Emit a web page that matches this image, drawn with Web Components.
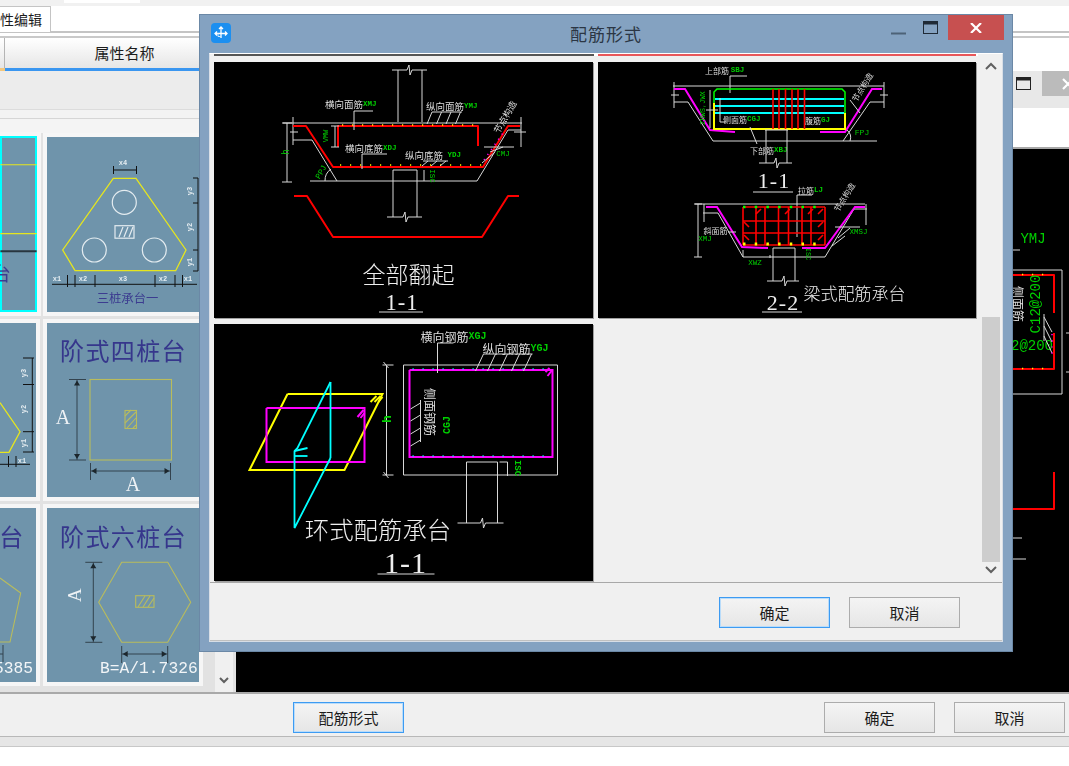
<!DOCTYPE html>
<html lang="zh">
<head>
<meta charset="utf-8">
<title>配筋形式</title>
<style>
  html, body { margin: 0; padding: 0; width: 1069px; height: 766px; overflow: hidden; background: #fff; }
  body { font-family: "Noto Sans CJK SC", "Liberation Sans", sans-serif; }
</style>
</head>
<body>
<cad-app>
  <pile-grid slot="thumbs">
    <pile-thumb drawing="a1" selected></pile-thumb>
    <pile-thumb drawing="a2"></pile-thumb>
    <pile-thumb drawing="b1"></pile-thumb>
    <pile-thumb drawing="b2"></pile-thumb>
    <pile-thumb drawing="c1"></pile-thumb>
    <pile-thumb drawing="c2"></pile-thumb>
  </pile-grid>
  <ui-button slot="left" primary>配筋形式</ui-button>
  <ui-button slot="right">确定</ui-button>
  <ui-button slot="right">取消</ui-button>
</cad-app>
<rebar-dialog caption="配筋形式">
  <cad-figure drawing="full"></cad-figure>
  <cad-figure drawing="beam"></cad-figure>
  <cad-figure drawing="ring"></cad-figure>
  <ui-button slot="actions" primary>确定</ui-button>
  <ui-button slot="actions">取消</ui-button>
</rebar-dialog>

<script>
// small svg helpers, all coordinates are screen pixels, the viewBox does the rest
const pl = (c, pts) => `<polyline class="${c}" points="${pts}"/>`;
const tx = (c, x, y, s, rot = 0, size = 0) =>
  `<text class="${c}" x="${x}" y="${y}" text-anchor="middle" dominant-baseline="central"${size ? ` font-size="${size}"` : ""}${rot ? ` transform="rotate(${rot} ${x} ${y})"` : ""}>${s}</text>`;
const lab = (x, y, cn, size, en, enSize) =>
  `<text class="lb" x="${x}" y="${y}" dominant-baseline="central" font-size="${size}">${cn}<tspan class="gr" font-size="${enSize}">${en}</tspan></text>`;
const brk = (c, x1, x, x2, y) => pl(c, `${x1},${y} ${x - 2},${y} ${x},${y - 5} ${x + 1},${y + 5} ${x + 3},${y} ${x2},${y}`);
const dots = (cls, x1, y1, x2, y2) => `<line class="${cls}" x1="${x1}" y1="${y1}" x2="${x2}" y2="${y2}"/>`;
const legs = (x, y, step, n, dx, dy) => {
  let d = "";
  for (let i = 0; i < n; i++) d += `M${x + i * step} ${y}l${dx} ${dy}`;
  return `<path class="w" d="${d}"/>`;
};

const FIGURES = {
  full: { view: "214 62 379 256", body: `
    ${brk("w", 392, 409, 427, 70)}
    ${pl("w", "398,70 398,122")}${pl("w", "422,70 422,122")}
    ${pl("w", "283,123 522,123")}
    ${pl("w", "287,123 287,182")}${pl("w", "282,123 292,123")}${pl("w", "282,182 292,182")}
    ${pl("w", "293,117 293,145")}${pl("w", "521,117 521,147")}
    ${pl("w", "290,132 298,132")}${pl("w", "514,132 526,132")}
    ${pl("w", "293,140 312,140 337,181")}
    ${pl("w", "310,181 477,181 508,130 521,130")}
    ${pl("r", "293,126 306,126 333,167 483,167 508,126 520,126")}
    ${pl("r", "478,146 478,126 338,126 338,147")}
    ${dots("yd", 342, 125, 476, 125)}${dots("yd", 340, 165, 482, 165)}
    ${dots("md", 484, 160, 505, 130)}
    ${pl("w", "331,126 339,126")}${pl("w", "331,147 339,147")}${pl("w", "335,126 335,147")}
    ${tx("gt", 286, 152, "h", -90, 10)}
    ${tx("gt", 326, 136, "VMW", -90, 7)}
    ${lab(325, 104, "横向面筋", 9.5, "XMJ", 7.5)}
    ${pl("w", "373,111 354,111 354,130")}
    ${lab(426, 106, "纵向面筋", 9.5, "YMJ", 7.5)}
    ${pl("w", "462,112 432,112")}${legs(432, 112, 9.5, 4, -5, 12)}
    ${lab(345, 148, "横向底筋", 9.5, "XDJ", 7.5)}
    ${pl("w", "387,154 362,154 362,169")}
    ${lab(405, 155, "纵向底筋", 9.5, " YDJ", 7.5)}
    ${pl("w", "448,161 423,161")}${legs(428, 161, 9, 3, -6, 5)}
    ${tx("lb", 505, 117, "节点构造", -60, 9)}
    ${tx("gt", 503, 154, "CMJ", 0, 7.5)}
    ${pl("w", "484,147 514,147")}${pl("w", "490,152 503,147")}${pl("w", "482,163 495,152")}
    ${tx("gt", 321, 172, "PPJ", -60, 8)}
    <path class="w" d="M325 181a14 14 0 0 1 6-12"/>
    ${tx("gt", 432, 176, "ISC", 90, 7.5)}
    ${pl("w", "424,170 424,181")}
    ${pl("w", "393,170 393,217")}${pl("w", "417,170 417,217")}${pl("w", "393,170 417,170")}
    ${brk("w", 387, 405, 422, 217)}
    ${pl("r", "294,196 307,196 333,237 482,237 508,196 519,196")}
    ${tx("tt", 408.5, 272.5, "全部翻起", 0, 23)}
    ${tx("nm", 402, 302, "1-1", 0, 22.5)}
    ${pl("w", "379,312 423,312")}
  ` },
  beam: { view: "598 62 378 256", body: `
    ${lab(705, 70, "上部筋 ", 8, "SBJ", 7.5)}
    ${pl("w", "747,76 730,76 730,93")}
    ${pl("w", "673,86 884,86")}${pl("w", "674,82 674,108")}${pl("w", "884,82 884,108")}
    ${pl("w", "671,95 679,95")}${pl("w", "880,95 888,95")}
    ${pl("w", "674,102 688,102 713,141 877,141")}
    ${pl("w", "843,141 870,102 884,102")}
    ${pl("m", "674,89 685,89 710,130 735,132")}
    ${pl("m", "820,132 845,132 872,89 882,89")}
    ${pl("gn", "714,128 714,92 717,89 842,89 845,92 845,128")}
    ${pl("ye", "714,103 714,129 845,129 845,113")}
    ${pl("cy", "715,99 844,99")}${pl("cy", "715,106 844,106")}${pl("cy", "715,113 844,113")}
    ${[773, 779, 785.5, 792, 798, 804.5].map(x => pl("rt", `${x},89 ${x},129`)).join("")}
    ${pl("w", "720,98 720,122 726,122")}
    ${pl("w", "710,90 710,128")}${pl("w", "706,110 718,110")}
    ${tx("gt", 703, 108, "ZHWS,JWX", -90, 7)}
    ${lab(723, 119, "侧面筋", 8, "CGJ", 7.5)}
    ${lab(805, 120, "腹筋", 8, "GJ", 7.5)}
    ${pl("w", "750,127 757,144")}
    ${lab(750, 150, "下部筋", 8, "XBJ", 7.5)}
    ${pl("w", "766,130 766,163")}${pl("w", "787,130 787,163")}${pl("w", "765,130 788,130")}
    ${brk("w", 759, 776, 792, 163)}
    ${tx("lb", 862, 87, "节点构造", -58, 8)}
    ${pl("w", "850,100 860,113")}
    <path class="w" d="M850 141a10 10 0 0 0 -3 -11"/>
    ${tx("gt", 862, 132, "FPJ", 0, 8)}
    ${tx("nm", 774, 180, "1-1", 0, 22)}
    ${pl("w", "753,192 793,192")}

    ${lab(798, 190, "拉筋", 8, "LJ", 7.5)}
    ${pl("w", "812,195 797,195 797,237")}
    ${pl("w", "695,204 865,204")}${pl("w", "698,204 698,257")}${pl("w", "694,204 702,204")}${pl("w", "694,257 702,257")}
    ${pl("w", "703,213 718,213 743,257 825,257 854,209 867,209")}
    ${pl("w", "704,204 704,222")}${pl("w", "866,204 866,225")}
    ${pl("m", "706,207 717,207 742,247 768,248")}
    ${pl("m", "802,248 825,248 855,207 865,207")}
    ${[743, 756, 765, 778.5, 788.5, 802, 811, 825].map(x => pl("rt", `${x},207 ${x},245`)).join("")}
    ${[207, 221, 233, 245].map(y => pl("rt", `743,${y} 825,${y}`)).join("")}
    ${pl("rt", "756,214 761,209")}${pl("rt", "785,214 790,209")}${pl("rt", "808,214 813,209")}${pl("rt", "818,214 823,209")}
    ${pl("rt", "744,222 749,227")}${pl("rt", "744,235 749,240")}${pl("rt", "823,222 818,227")}${pl("rt", "823,235 818,240")}
    ${dots("gd", 743, 207, 825, 207)}${dots("yb", 743, 244, 825, 244)}
    ${tx("lb", 715.5, 230.5, "斜面筋", 0, 8)}${pl("w", "728,232 736,232")}
    ${tx("gt", 705, 239, "XMJ", 0, 7.5)}
    ${tx("gt", 858.5, 231.5, "XMSJ", 0, 7.5)}
    ${pl("w", "835,227 860,227")}${pl("w", "838,238 850,228")}${pl("w", "832,246 845,236")}
    ${tx("gt", 755, 263, "XWZ", 0, 7.5)}
    ${pl("w", "743,257 743,250")}${pl("w", "770,258 770,255")}
    ${tx("gt", 808, 254, "ISC", 90, 7)}
    ${pl("w", "773,248 773,281")}${pl("w", "795,248 795,281")}${pl("w", "773,248 795,248")}
    ${brk("w", 767, 784, 799, 281)}
    ${tx("lb", 844, 197, "节点构造", -58, 8)}
    ${tx("nm", 783, 302, "2-2", 0, 22)}
    ${pl("w", "762,312 802,312")}
    ${tx("tt", 854.5, 292, "梁式配筋承台", 0, 17)}
  ` },
  ring: { view: "214 324 378 257", body: `
    ${pl("ye", "287,394 382,394 344,470 249,470 287,394")}
    ${pl("m", "266,408 364,408 364,462 266,462 266,408")}
    ${pl("cy", "330,382 330,458")}
    ${pl("cy", "330,382 297,448 294,451 294,528 330,458")}
    ${pl("cy", "294,451 307,448")}${pl("cy", "294,456 307,456")}
    ${pl("ye", "370,402 376,396")}${pl("ye", "374,402 380,396")}${pl("ye", "378,402 382,397")}
    ${pl("m", "357,417 363,410")}${pl("m", "360,418 364,413")}
    ${pl("w", "403,365 557,365 557,475 403,475 403,365")}
    ${pl("m", "409,370 552,370 552,457 409,457 409,370")}
    ${dots("cd", 412, 369, 550, 369)}${dots("cd", 412, 456, 550, 456)}
    ${pl("m", "547,376 551,371")}${pl("m", "545,372 549,368")}
    ${pl("w", "386,365 386,475")}${pl("w", "382,365 393,365")}${pl("w", "382,475 393,475")}
    ${pl("w", "383,362 388,368")}${pl("w", "383,472 388,478")}
    ${tx("gs", 387, 419, "h", -90, 13)}
    ${lab(420, 336, "横向钢筋", 12, "XGJ", 10)}
    ${pl("w", "453,343 437,343 437,373")}
    ${lab(482, 348, "纵向钢筋", 12, "YGJ", 10)}
    ${pl("w", "532,354 483,354")}${legs(483, 354, 12, 5, -8, 17)}
    ${tx("lb", 430, 412, "侧面钢筋", 90, 12)}
    ${tx("gs", 447, 425, "CGJ", -90, 10)}
    ${pl("w", "420,400 420,442")}${legs(420, 403, 0, 1, -10, 6)}${legs(420, 415, 0, 1, -10, 6)}${legs(420, 428, 0, 1, -10, 6)}${legs(420, 440, 0, 1, -10, 6)}
    ${pl("w", "466,462 466,523")}${pl("w", "497,462 497,523")}${pl("w", "466,462 497,462")}
    ${brk("w", 457, 482, 503, 523)}
    ${pl("w", "499,462 507,462 507,476")}
    ${tx("gs", 516, 468, "ISC", 90, 9)}
    ${tx("tt", 377.5, 528, "环式配筋承台", 0, 24.4)}
    ${tx("nm", 405, 562, "1-1", 0, 30)}
    ${pl("w", "377,574 434,574")}
  ` }
};

const FIGURE_CSS = `
  svg { display: block; width: 100%; height: 100%; filter: blur(.25px); }
  polyline, path, line { fill: none; }
  .w { stroke: #d8d8d8; stroke-width: 1; }
  .r { stroke: #f00; stroke-width: 2; stroke-linejoin: round; }
  .rt { stroke: #f00; stroke-width: 1.6; }
  .m { stroke: #f0f; stroke-width: 2; }
  .ye { stroke: #ff0; stroke-width: 2; }
  .cy { stroke: #0ff; stroke-width: 1.8; }
  .gn { stroke: #0f0; stroke-width: 1.5; }
  .yd { stroke: #ff0; stroke-width: 1.5; stroke-dasharray: 1.2 8.8; }
  .md { stroke: #f0f; stroke-width: 1.5; stroke-dasharray: 1.2 5; }
  .cd { stroke: #0ff; stroke-width: 1.5; stroke-dasharray: 1.2 8.8; }
  .gd { stroke: #0f0; stroke-width: 2.5; stroke-dasharray: 2.5 9.2; }
  .yb { stroke: #ff0; stroke-width: 3; stroke-dasharray: 2.5 9.2; }
  text { font-family: "Noto Sans CJK SC", "Liberation Sans", sans-serif; }
  .lb { fill: #dcdcdc; }
  .tt { fill: #eee; font-weight: 300; }
  .nm { fill: #eee; font-family: "Liberation Serif", serif; letter-spacing: 1px; }
  .gr, .gt, .gs { fill: #00d000; font-family: "Liberation Mono", monospace; }
  .gs, .gr { font-weight: bold; }
`;

class CadFigure extends HTMLElement {
  constructor() {
    super();
    this.shadowDOM = this.attachShadow({ mode: "open" });
  }

  connectedCallback() {
    const fig = FIGURES[this.getAttribute("drawing")];
    this.shadowDOM.innerHTML = `
      <style>
        :host { display: block; background: #000; }
        ${FIGURE_CSS}
      </style>
      <svg viewBox="${fig.view}">${fig.body}</svg>
    `;
  }
}
customElements.define("cad-figure", CadFigure);

// dimension line with arrow heads, thumbnails use these a lot
const dimV = (x, y1, y2) => `<path class="dk" d="M${x} ${y1}V${y2}"/><path class="ar" d="M${x} ${y1 + 1}l-3 5h6zM${x} ${y2 - 1}l-3 -5h6z"/><path class="dk" d="M${x - 8} ${y1}h17M${x - 8} ${y2}h17"/>`;
const dimH = (y, x1, x2) => `<path class="dk" d="M${x1} ${y}H${x2}"/><path class="ar" d="M${x1 + 1} ${y}l5 -3v6zM${x2 - 1} ${y}l-5 -3v6z"/><path class="dk" d="M${x1} ${y - 8}v17M${x2} ${y - 8}v17"/>`;
const bar = (x1, y1, x2, y2) => `<path class="bk" d="M${x1} ${y1}L${x2} ${y2}"/>`;

const THUMBS = {
  a1: { view: "0 137 36 175", body: `
    <path class="yt" d="M0 165.7H36"/><path class="yl" d="M0 234H36"/>
    <path class="bk2" d="M0 251.7H36"/>
    ${tx("ti", 1, 273, "台", 0, 19)}
  ` },
  a2: { view: "47 137 152 175", body: `
    <polygon class="yl" points="113.3,178.3 136,178.3 186,250 175.7,270.7 75,270.7 62.7,250"/>
    <circle class="cw" cx="124.3" cy="202.3" r="12"/><circle class="cw" cx="94.3" cy="250" r="12"/><circle class="cw" cx="154.3" cy="250" r="12"/>
    <rect class="cw" x="115" y="225.7" width="19" height="12.5"/>
    <path class="cw" d="M119 237l4 -10M124 237l4 -10M129 237l4 -10"/>
    ${bar(113.5, 170, 136.5, 170)}${bar(113.5, 166, 113.5, 174)}${bar(136.5, 166, 136.5, 174)}
    ${tx("sm", 123, 163, "x4")}
    ${bar(198, 178, 198, 271)}${bar(193, 178, 198, 178)}${bar(193, 203, 198, 203)}${bar(193, 250, 198, 250)}${bar(193, 271, 198, 271)}
    ${tx("sm", 190, 191, "y3", -90)}${tx("sm", 190, 227, "y2", -90)}${tx("sm", 190, 262, "y1", -90)}
    ${bar(52, 284.3, 197, 284.3)}
    ${[67.5, 75, 95, 155, 175, 182.5].map(x => bar(x, 275, x, 287)).join("")}
    ${tx("sm", 57, 279, "x1")}${tx("sm", 83, 279, "x2")}${tx("sm", 123, 279, "x3")}${tx("sm", 163, 279, "x2")}${tx("sm", 188, 279, "x1")}
    ${tx("ti", 127.5, 297.5, "三桩承台一", 0, 12.3)}
  ` },
  b1: { view: "0 323 36 174", body: `
    <polyline class="yl" points="0,402.7 20,431.7 9,452.3 0,452.3"/>
    ${bar(32.3, 358, 32.3, 452)}${bar(23, 358, 34, 358)}${bar(23, 384.5, 34, 384.5)}${bar(23, 431.7, 34, 431.7)}${bar(23, 452, 34, 452)}
    ${tx("sm", 24, 373, "y3", -90)}${tx("sm", 24, 409, "y2", -90)}${tx("sm", 24, 443, "y1", -90)}
    ${bar(0, 464.3, 30, 464.3)}${bar(8.5, 456, 8.5, 467)}${bar(16, 456, 16, 467)}
    ${tx("sm", 22, 460.7, "x1")}
  ` },
  b2: { view: "47 323 152 174", body: `
    ${tx("hd", 123.5, 349, "阶式四桩台", 0, 24)}
    <rect class="ys" x="90" y="379.5" width="81.5" height="80.5"/>
    <rect class="ys" x="125" y="410.5" width="11.5" height="18"/>
    <path class="ys" d="M125 416l6 -6M125 423l11 -11M127 428l9 -10M133 428l3 -3"/>
    ${dimV(77, 379.5, 460)}${dimH(471, 90.5, 170.5)}
    ${tx("ltr", 63, 417, "A", 0, 20)}${tx("ltr", 133, 484, "A", 0, 20)}
  ` },
  c1: { view: "0 508 36 174", body: `
    ${tx("hd", 12, 535, "台", 0, 24)}
    <polyline class="ys" points="0,578 20.7,593 10,642 0,642"/>
    <path class="dk" d="M3 645v17M0 654h3"/>
    <text class="mn" x="33" y="668" text-anchor="end" dominant-baseline="central" font-size="16.3">5385</text>
  ` },
  c2: { view: "47 508 152 174", body: `
    ${tx("hd", 123.5, 535, "阶式六桩台", 0, 24)}
    <polygon class="ys" points="121.7,562.3 167.7,562.3 190.7,602.3 167.7,642.3 121.7,642.3 98.7,602.3"/>
    <rect class="ys" x="135.7" y="595.7" width="18.3" height="11.6"/>
    <path class="ys" d="M138 607l7 -11M143 607l7 -11M148 607l6 -9"/>
    ${dimV(93.3, 562.3, 642.3)}${dimH(654, 121.7, 167.7)}
    ${tx("ltr", 74, 595, "A", -90, 19)}
    <text class="mn" x="100" y="668" dominant-baseline="central" font-size="16.3">B=A/1.7326</text>
  ` }
};

class PileThumb extends HTMLElement {
  constructor() {
    super();
    this.shadowDOM = this.attachShadow({ mode: "open" });
  }

  connectedCallback() {
    const fig = THUMBS[this.getAttribute("drawing")];
    this.shadowDOM.innerHTML = `
      <style>
        :host { display: block; background: #6f94ab; outline: 4px solid #f6f6f6; position: relative; }
        :host([selected]) { outline: 2px solid #0ff; outline-offset: -2px; margin: -1px -1px 0 0; box-shadow: 0 0 0 4px #f6f6f6; }
        svg { display: block; width: 100%; height: 100%; filter: blur(.3px); }
        path, polyline, polygon, rect, circle { fill: none; }
        .yl { stroke: #e6e61e; stroke-width: 1.3; }
        .yt { stroke: #e6e61e; stroke-width: 1; }
        .ys { stroke: #b9bc5c; stroke-width: 1.1; }
        .cw { stroke: #e4ecf0; stroke-width: 1.2; }
        .bk { stroke: #111; stroke-width: 1; }
        .bk2 { stroke: #28363f; stroke-width: 2; }
        .dk { stroke: #33434e; stroke-width: 1; }
        path.ar { fill: #1c262c; }
        text { font-family: "Noto Sans CJK SC", "Liberation Sans", sans-serif; }
        .ti { fill: #3c3c90; }
        .hd { fill: #36368c; letter-spacing: 1.4px; font-family: "Noto Sans CJK SC", serif; }
        .sm { fill: #e4ecf0; font: 7px "Liberation Mono", monospace; font-weight: bold; }
        .ltr { fill: #eef2f5; font-family: "Liberation Serif", serif; }
        .mn { fill: #f2f5f7; font-family: "Liberation Mono", monospace; }
      </style>
      <svg viewBox="${fig.view}">${fig.body}</svg>
    `;
  }
}
customElements.define("pile-thumb", PileThumb);

class PileGrid extends HTMLElement {
  constructor() {
    super();
    this.attachShadow({ mode: "open" }).innerHTML = `
      <style>
        :host {
          display: grid;
          grid-template-columns: 36px 152px;
          grid-template-rows: 175px 174px 174px;
          column-gap: 11px;
          row-gap: 11px;
        }
      </style>
      <slot></slot>
    `;
  }
}
customElements.define("pile-grid", PileGrid);

class UiButton extends HTMLElement {
  constructor() {
    super();
    this.attachShadow({ mode: "open" }).innerHTML = `
      <style>
        :host {
          display: flex;
          align-items: center;
          justify-content: center;
          box-sizing: border-box;
          width: 111px;
          height: 31px;
          border: 1px solid #acacac;
          background: linear-gradient(#f4f4f4, #e6e6e6);
          color: #1c1c1c;
          font: 15px "Noto Sans CJK SC", "Liberation Sans", sans-serif;
        }
        :host([primary]) { border: 1px solid #3d9bf2; box-shadow: inset 0 0 0 1px #b9dcfa; }
      </style>
      <slot></slot>
    `;
  }
}
customElements.define("ui-button", UiButton);

class ScrollBar extends HTMLElement {
  constructor() {
    super();
    this.attachShadow({ mode: "open" }).innerHTML = `
      <style>
        :host { display: flex; flex-direction: column; align-items: center; background: #f0f0f0; box-sizing: border-box; }
        svg { flex: none; width: 18px; height: 10px; fill: none; stroke: #606060; stroke-width: 2; }
        svg.up { margin: 7px 0 5px; }
        svg.down { margin: 3px 0 7px; }
        .track { flex: 1; align-self: stretch; padding: var(--before, 0px) 0 var(--after, 0px); display: flex; }
        .thumb { flex: 1; background: #cdcdcd; }
      </style>
      <svg class="up" viewBox="0 0 18 10"><path d="M4 8l5 -5 5 5"/></svg>
      <div class="track"><div class="thumb"></div></div>
      <svg class="down" viewBox="0 0 18 10"><path d="M4 2l5 5 5 -5"/></svg>
    `;
  }
}
customElements.define("scroll-bar", ScrollBar);

class RebarDialog extends HTMLElement {
  constructor() {
    super();
    this.shadowDOM = this.attachShadow({ mode: "open" });
  }

  connectedCallback() {
    this.shadowDOM.innerHTML = `
      <style>
        :host {
          position: absolute;
          left: 199px;
          top: 14px;
          width: 814px;
          height: 638px;
          box-sizing: border-box;
          display: flex;
          flex-direction: column;
          background: #84a2c1;
          border: 1px solid #6b88a6;
          padding: 0 9px 9px;
          font-family: "Noto Sans CJK SC", "Liberation Sans", sans-serif;
        }
        .bar { height: 38px; flex: none; display: flex; align-items: flex-start; position: relative; }
        .icon { width: 20px; height: 20px; margin: 8px 0 0 2px; }
        .caption { position: absolute; left: 0; right: 0; top: 8px; text-align: center; font-size: 17px; letter-spacing: 1px; line-height: 22px; color: #2b3644; }
        .ctrls { margin-left: auto; display: flex; align-items: flex-start; margin-right: -1px; position: relative; }
        .ctrl { width: 32px; height: 25px; display: flex; align-items: center; justify-content: center; }
        .ctrl.close { width: 56px; background: #c75050; margin-left: 1px; }
        .client { flex: 1; display: flex; flex-direction: column; background: #f0f0f0; border: 1px solid #d8dee6; border-top-color: #fff; min-height: 0; }
        .scroller { flex: 1; display: flex; min-height: 0; border-bottom: 1px solid #a8a8a8; }
        .content { flex: 1; padding: 0 4px 0 4px; background: #f0f0f0; }
        .tails { display: grid; grid-template-columns: 380px 378px; column-gap: 4px; height: 2px; margin: 0 0 6px; background: #fff; box-shadow: 0 -1px 0 #fff; }
        .tails i:first-child { background: #555; }
        .tails i:last-child { background: #e8575a; }
        .figures {
          display: grid;
          grid-template-columns: 379px 378px;
          grid-template-rows: 256px 257px;
          column-gap: 5px;
          row-gap: 6px;
          padding-top: 0;
        }
        ::slotted(cad-figure) { box-shadow: 1px 1px 0 #a0a0a0; }
        scroll-bar { flex: none; width: 18px; margin-right: 2px; --before: 241px; --after: 0px; }
        .actions { height: 58px; flex: none; display: flex; gap: 19px; padding: 14px 42px 0 0; box-sizing: border-box; justify-content: flex-end; border-bottom: 1px solid #c0c0c0; }
      </style>
      <div class="bar">
        <svg class="icon" viewBox="0 0 20 20">
          <rect width="20" height="20" rx="4" fill="#1c8ff0"/>
          <path d="M10 4v11M4 10.5h12M8 6l2 -2 2 2M6 8.5l-2 2 2 2M14 8.5l2 2 -2 2" fill="none" stroke="#fff" stroke-width="1.3"/>
          <path d="M7 10.5v3h3" fill="none" stroke="#cfe8ff" stroke-width="1"/>
        </svg>
        <div class="caption">${this.getAttribute("caption")}</div>
        <div class="ctrls">
          <div class="ctrl"><svg width="16" height="16"><path d="M0 13.5h15" stroke="#4d6277" stroke-width="2"/></svg></div>
          <div class="ctrl"><svg width="16" height="14"><rect x=".5" y=".5" width="14" height="12" fill="none" stroke="#1f2a36"/><path d="M0 2h15" stroke="#1f2a36" stroke-width="3"/></svg></div>
          <div class="ctrl close"><svg width="12" height="10"><path d="M1 0l10 10M11 0l-10 10" stroke="#fff" stroke-width="2.2"/></svg></div>
        </div>
      </div>
      <div class="client">
        <div class="scroller">
          <div class="content">
            <div class="tails"><i></i><i></i></div>
            <div class="figures"><slot></slot></div>
          </div>
          <scroll-bar></scroll-bar>
        </div>
        <div class="actions"><slot name="actions"></slot></div>
      </div>
    `;
  }
}
customElements.define("rebar-dialog", RebarDialog);

class CadCanvas extends HTMLElement {
  constructor() {
    super();
    this.attachShadow({ mode: "open" }).innerHTML = `
      <style>
        :host { display: block; background: #000; }
        ${FIGURE_CSS}
      </style>
      <svg viewBox="236 149 833 541">
        ${tx("gt", 1033, 238, "YMJ", 0, 14)}
        ${pl("w", "1013,249 1020,249")}
        ${pl("w", "1013,269 1062,269 1062,393 1013,393")}
        ${pl("r", "1013,274 1054,274 1054,312")}
        ${pl("r", "1054,332 1054,368 1013,368")}
        ${dots("yd", 1022, 273.5, 1052, 273.5)}${dots("yd", 1022, 367.5, 1052, 367.5)}
        ${tx("lb", 1018, 303, "侧面筋", 90, 12)}
        ${tx("gt", 1036, 303, "C12@200", -90, 14)}
        ${tx("gt", 1032, 345, "2@200", 0, 14)}
        ${pl("w", "1044,313 1044,340")}${pl("w", "1044,316 1052,331")}${pl("w", "1044,325 1052,341")}${pl("w", "1044,335 1052,352")}
        ${dots("md", 1052, 333, 1052, 354)}
        ${pl("w", "1066,332 1069,332")}${pl("w", "1066,371 1069,371")}
        ${pl("r", "1054,471 1054,508 1013,508")}
        ${pl("w", "1013,537 1022,537")}${pl("w", "1013,558 1026,558")}
      </svg>
    `;
  }
}
customElements.define("cad-canvas", CadCanvas);

class CadApp extends HTMLElement {
  constructor() {
    super();
    this.attachShadow({ mode: "open" }).innerHTML = `
      <style>
        :host {
          display: flex;
          flex-direction: column;
          width: 1069px;
          height: 766px;
          overflow: hidden;
          background: #fff;
          color: #1c1c1c;
          font-family: "Noto Sans CJK SC", "Liberation Sans", sans-serif;
        }
        .top { height: 6px; flex: none; background: #f1f1f1; padding-left: 64px; }
        .top i { display: block; width: 76px; height: 3px; background: #fff; }
        .tabs { height: 27px; flex: none; box-sizing: border-box; border-bottom: 2px solid #c4c4c4; background: #fff; }
        .tab { width: 51px; height: 26px; box-sizing: border-box; border: 1px solid #c4c4c4; border-left: 0; border-bottom: 0; background: #fff; font-size: 14px; line-height: 25px; }
        .main { height: 659px; flex: none; display: flex; }
        .left { width: 233px; flex: none; display: flex; flex-direction: column; min-height: 0; overflow: hidden; background: #f2f2f2; }
        .rule { height: 5px; flex: none; border-bottom: 2px solid #c9c9c9; background: #fff; box-sizing: border-box; }
        .head { height: 30px; flex: none; display: flex; background: linear-gradient(#fff, #e6e6e6); font-size: 15px; line-height: 30px; }
        .head .stub { width: 4px; flex: none; border-right: 1px solid #b4b4b4; }
        .head .name { width: 239px; flex: none; text-align: center; }
        .line { height: 3px; flex: none; background: #3a96f0; border-left: 5px solid #f3c77d; }
        .band { height: 39px; flex: none; background: #ececec; border-bottom: 1px solid #dcdcdc; box-sizing: border-box; }
        .band2 { height: 9px; flex: none; background: #f3f3f3; border-bottom: 1px solid #d6d6d6; box-sizing: border-box; }
        .body { flex: 1; display: flex; min-height: 0; }
        .thumbs { width: 215px; flex: none; padding-top: 18px; box-sizing: border-box; overflow: hidden; background: #e2e2e2 linear-gradient(#f4f4f4 0 14px, transparent 14px); }
        .sb { flex: 1; background: #f0f0f0; display: flex; flex-direction: column; justify-content: flex-end; align-items: center; padding-bottom: 8px; }
        .sb svg { width: 12px; height: 8px; fill: none; stroke: #606060; stroke-width: 2; }
        .gutter { width: 3px; flex: none; background: #e2e2e2; }
        .right { flex: 1; display: flex; flex-direction: column; min-width: 0; }
        .rrule { height: 5px; flex: none; border-bottom: 2px solid #c9c9c9; box-sizing: border-box; }
        .space { height: 33px; flex: none; background: #fff; }
        .rtitle { height: 37px; flex: none; background: #e8e8e8; display: flex; align-items: flex-start; justify-content: flex-end; }
        .rtitle .max { margin: 6px 10px 0 0; }
        .rtitle .cls { width: 27px; height: 25px; background: #bbb; display: flex; align-items: center; justify-content: flex-end; overflow: hidden; }
        .rspace { height: 39px; flex: none; background: #fff; border-bottom: 2px solid #a8a8a8; }
        cad-canvas { flex: 1; min-height: 0; }
        .foot { height: 45px; flex: none; display: flex; box-sizing: border-box; padding-top: 8px; background: #f0f0f0; border-top: 2px solid #a9a9a9; border-bottom: 1px solid #b8b8b8; justify-content: space-between; }
        .foot .l { padding-left: 293px; display: flex; }
        .foot .r { padding-right: 4px; display: flex; gap: 19px; }
        .status { height: 10px; flex: none; box-sizing: border-box; background: #e6e6e6; border-bottom: 1px solid #c8c8c8; }
      </style>
      <div class="top"><i></i></div>
      <div class="tabs"><div class="tab">性编辑</div></div>
      <div class="main">
        <div class="left">
          <div class="rule"></div>
          <div class="head"><div class="stub"></div><div class="name">属性名称</div></div>
          <div class="line"></div>
          <div class="band"></div>
          <div class="band2"></div>
          <div class="body">
            <div class="thumbs"><slot name="thumbs"></slot></div>
            <div class="sb"><svg viewBox="0 0 12 8"><path d="M2 2l4 4 4 -4"/></svg></div>
          </div>
        </div>
        <div class="gutter"></div>
        <div class="right">
          <div class="rrule"></div>
          <div class="space"></div>
          <div class="rtitle">
            <svg class="max" width="16" height="14"><rect x=".5" y=".5" width="14" height="12" fill="none" stroke="#222"/><path d="M0 2h15" stroke="#222" stroke-width="3"/></svg>
            <div class="cls"><svg width="10" height="12" viewBox="0 0 10 12" style="margin-right:-1px"><path d="M3 1l10 10M13 1l-10 10" stroke="#fff" stroke-width="2.2"/></svg></div>
          </div>
          <div class="rspace"></div>
          <cad-canvas></cad-canvas>
        </div>
      </div>
      <div class="foot">
        <div class="l"><slot name="left"></slot></div>
        <div class="r"><slot name="right"></slot></div>
      </div>
      <div class="status"></div>
    `;
  }
}
customElements.define("cad-app", CadApp);
</script>
</body>
</html>
